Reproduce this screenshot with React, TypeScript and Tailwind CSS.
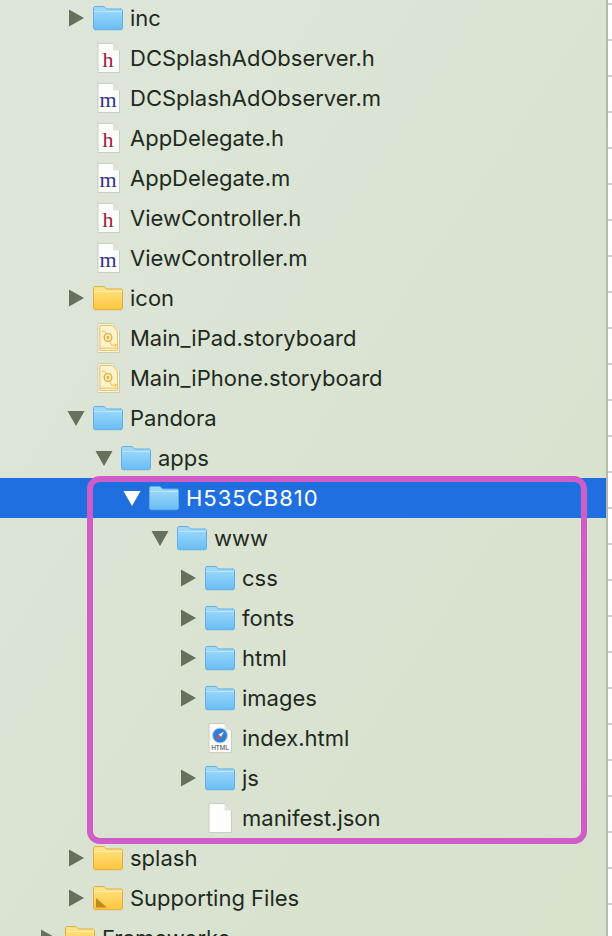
import React from 'react';

type Tone = 'blue' | 'yellow';

function Folder({ tone, badge }: { tone: Tone; badge?: boolean }) {
  const id = `folder-${tone}`;
  const top = tone === 'blue' ? '#a3dcfc' : '#ffe58a';
  const bottom = tone === 'blue' ? '#69bdf5' : '#fdc53c';
  const line = tone === 'blue' ? '#62aee4' : '#dfae3c';
  return (
    <svg width="30" height="26" viewBox="0 0 30 26" className="shrink-0">
      <defs>
        <linearGradient id={id} x1="0" y1="0" x2="0" y2="1">
          <stop offset="0" stopColor={top} />
          <stop offset="1" stopColor={bottom} />
        </linearGradient>
      </defs>
      <path
        d="M2 1.5h8c1.2 0 1.6.4 2.4 1.2l1.2 1.3H28c.8 0 1.5.7 1.5 1.5V23c0 1-.7 1.7-1.5 1.7H2c-.8 0-1.5-.7-1.5-1.7V3c0-.8.7-1.5 1.5-1.5z"
        fill={`url(#${id})`}
        stroke={line}
      />
      <path d="M1 6.5h28" stroke={tone === 'blue' ? '#bfe8fe' : '#fff0b0'} strokeWidth="1" />
      {badge && <path d="M3 22.5V13l11 9.5z" fill="#c08a1e" />}
    </svg>
  );
}

function Page({ width = 24 }: { width?: number }) {
  return (
    <svg width={width} height="30" viewBox="0 0 24 30" preserveAspectRatio="none" className="shrink-0">
      <path d="M1 .5h15.5L23.5 7.5V29.5H1z" fill="#fdfdfb" stroke="#c8ccc2" strokeWidth="1" />
      <path d="M16.5 .5V7.5H23.5z" fill="#e3e6de" />
    </svg>
  );
}

function SourceFile({ letter }: { letter: 'h' | 'm' }) {
  return (
    <div className="relative h-[30px] w-[23px] shrink-0">
      <Page width={23} />
      <span
        className={`absolute bottom-0 left-0 right-0 text-center font-['Liberation_Serif',serif] text-[22px] leading-[26px] ${
          letter === 'h' ? 'text-[#a3203c]' : 'text-[#33308a]'
        }`}
      >
        {letter}
      </span>
    </div>
  );
}

function Storyboard() {
  return (
    <svg width="23" height="30" viewBox="0 0 24 31" preserveAspectRatio="none" className="shrink-0">
      <path d="M1 .5h15.5L23.5 7.5V30.5H1z" fill="#fdfdf5" stroke="#c9c8b5" />
      <path d="M16.5 .5V7.5H23.5z" fill="#e3e6de" />
      <path d="M3 2.5h13l5.5 6V28.5H3z" fill="#fdf3cf" stroke="#e7b94a" strokeWidth="1" />
      <circle cx="11.5" cy="15" r="4" fill="none" stroke="#e6a92e" strokeWidth="1.4" />
      <circle cx="11.5" cy="15" r="1.6" fill="#e6a92e" />
      <path d="M5 8.5h3l2 3M14 19l1 4h5M18.5 21.5l2 1.5-2 1.5M3 26h18" fill="none" stroke="#e7b94a" strokeWidth="1" />
    </svg>
  );
}

function HtmlFile() {
  return (
    <div className="relative h-[30px] w-[24px] shrink-0">
      <svg width="24" height="30" viewBox="0 0 24 30">
        <path d="M1 .5h15.5L23.5 7.5V29.5H1z" fill="#fbfbfa" stroke="#c8ccc2" />
        <path d="M16.5 .5V7.5H23.5z" fill="#e3e6de" />
        <circle cx="12" cy="12.5" r="7.5" fill="#2f7fd6" stroke="#bcd8ef" />
        <path d="M16 8.5l-3 5.5-2.5-2.5z" fill="#f4f4f4" />
        <path d="M8 16.5l2.5-5 2.5 2.5z" fill="#e2503f" />
      </svg>
      <span className="absolute bottom-[1px] left-0 right-0 text-center font-['Liberation_Sans',sans-serif] text-[6.5px] font-normal leading-[8px] text-[#3c3c3c]">
        HTML
      </span>
    </div>
  );
}

function Triangle({ open, light }: { open?: boolean; light?: boolean }) {
  const fill = light ? '#ffffff' : '#66705d';
  return (
    <svg width="20" height="20" viewBox="0 0 20 20" className="shrink-0">
      {open ? <path d="M1.5 3h17L10 18z" fill={fill} /> : <path d="M3 1.5l15 8.5-15 8.5z" fill={fill} />}
    </svg>
  );
}

type Row = {
  label: string;
  indent: string;
  arrow?: 'open' | 'closed';
  icon: React.ReactNode;
  selected?: boolean;
};

const rows: Row[] = [
  { label: 'inc', indent: 'pl-[66px]', arrow: 'closed', icon: <Folder tone="blue" /> },
  { label: 'DCSplashAdObserver.h', indent: 'pl-[66px]', icon: <SourceFile letter="h" /> },
  { label: 'DCSplashAdObserver.m', indent: 'pl-[66px]', icon: <SourceFile letter="m" /> },
  { label: 'AppDelegate.h', indent: 'pl-[66px]', icon: <SourceFile letter="h" /> },
  { label: 'AppDelegate.m', indent: 'pl-[66px]', icon: <SourceFile letter="m" /> },
  { label: 'ViewController.h', indent: 'pl-[66px]', icon: <SourceFile letter="h" /> },
  { label: 'ViewController.m', indent: 'pl-[66px]', icon: <SourceFile letter="m" /> },
  { label: 'icon', indent: 'pl-[66px]', arrow: 'closed', icon: <Folder tone="yellow" /> },
  { label: 'Main_iPad.storyboard', indent: 'pl-[66px]', icon: <Storyboard /> },
  { label: 'Main_iPhone.storyboard', indent: 'pl-[66px]', icon: <Storyboard /> },
  { label: 'Pandora', indent: 'pl-[66px]', arrow: 'open', icon: <Folder tone="blue" /> },
  { label: 'apps', indent: 'pl-[94px]', arrow: 'open', icon: <Folder tone="blue" /> },
  { label: 'H535CB810', indent: 'pl-[122px]', arrow: 'open', icon: <Folder tone="blue" />, selected: true },
  { label: 'www', indent: 'pl-[150px]', arrow: 'open', icon: <Folder tone="blue" /> },
  { label: 'css', indent: 'pl-[178px]', arrow: 'closed', icon: <Folder tone="blue" /> },
  { label: 'fonts', indent: 'pl-[178px]', arrow: 'closed', icon: <Folder tone="blue" /> },
  { label: 'html', indent: 'pl-[178px]', arrow: 'closed', icon: <Folder tone="blue" /> },
  { label: 'images', indent: 'pl-[178px]', arrow: 'closed', icon: <Folder tone="blue" /> },
  { label: 'index.html', indent: 'pl-[178px]', icon: <HtmlFile /> },
  { label: 'js', indent: 'pl-[178px]', arrow: 'closed', icon: <Folder tone="blue" /> },
  { label: 'manifest.json', indent: 'pl-[178px]', icon: <Page /> },
  { label: 'splash', indent: 'pl-[66px]', arrow: 'closed', icon: <Folder tone="yellow" /> },
  { label: 'Supporting Files', indent: 'pl-[66px]', arrow: 'closed', icon: <Folder tone="yellow" badge /> },
  { label: 'Frameworks', indent: 'pl-[38px]', arrow: 'closed', icon: <Folder tone="yellow" /> },
];

const ticks = Array.from({ length: 26 }, (_, i) => i);

export default function App() {
  return (
    <div className="relative flex h-[936px] w-[612px] overflow-hidden bg-white font-['Inter',sans-serif] text-[#1e2a1e]">
      <div className="-mt-[2px] flex w-[606px] shrink-0 flex-col bg-gradient-to-br from-[#dde6d9] to-[#d8e1cc]">
        {rows.map((row) => (
          <div
            key={row.label}
            className={`flex h-[40px] shrink-0 items-center ${row.indent} ${
              row.selected ? 'bg-[#1f6fe0] text-white' : ''
            }`}
          >
            <div className="flex w-[20px] shrink-0 justify-center">
              {row.arrow && <Triangle open={row.arrow === 'open'} light={row.selected} />}
            </div>
            <div className="ml-[7px] flex w-[30px] shrink-0 justify-center">{row.icon}</div>
            <span
              className={`ml-[7px] whitespace-nowrap text-[22px] leading-[26px] ${
                row.selected ? 'tracking-[1px]' : ''
              }`}
            >
              {row.label}
            </span>
          </div>
        ))}
      </div>
      <div className="h-full w-[2px] shrink-0 bg-[#b4bbae]" />
      <div className="flex w-[4px] shrink-0 flex-col gap-[34px] pt-[3px]">
        {ticks.map((t) => (
          <div key={t} className="h-[2px] shrink-0 bg-[#cfcfcf]" />
        ))}
      </div>
      {/* annotation drawn over the tree */}
      <div className="absolute left-[87px] top-[476px] h-[368px] w-[500px] rounded-[13px] border-[6px] border-[#d05cc8]" />
    </div>
  );
}
